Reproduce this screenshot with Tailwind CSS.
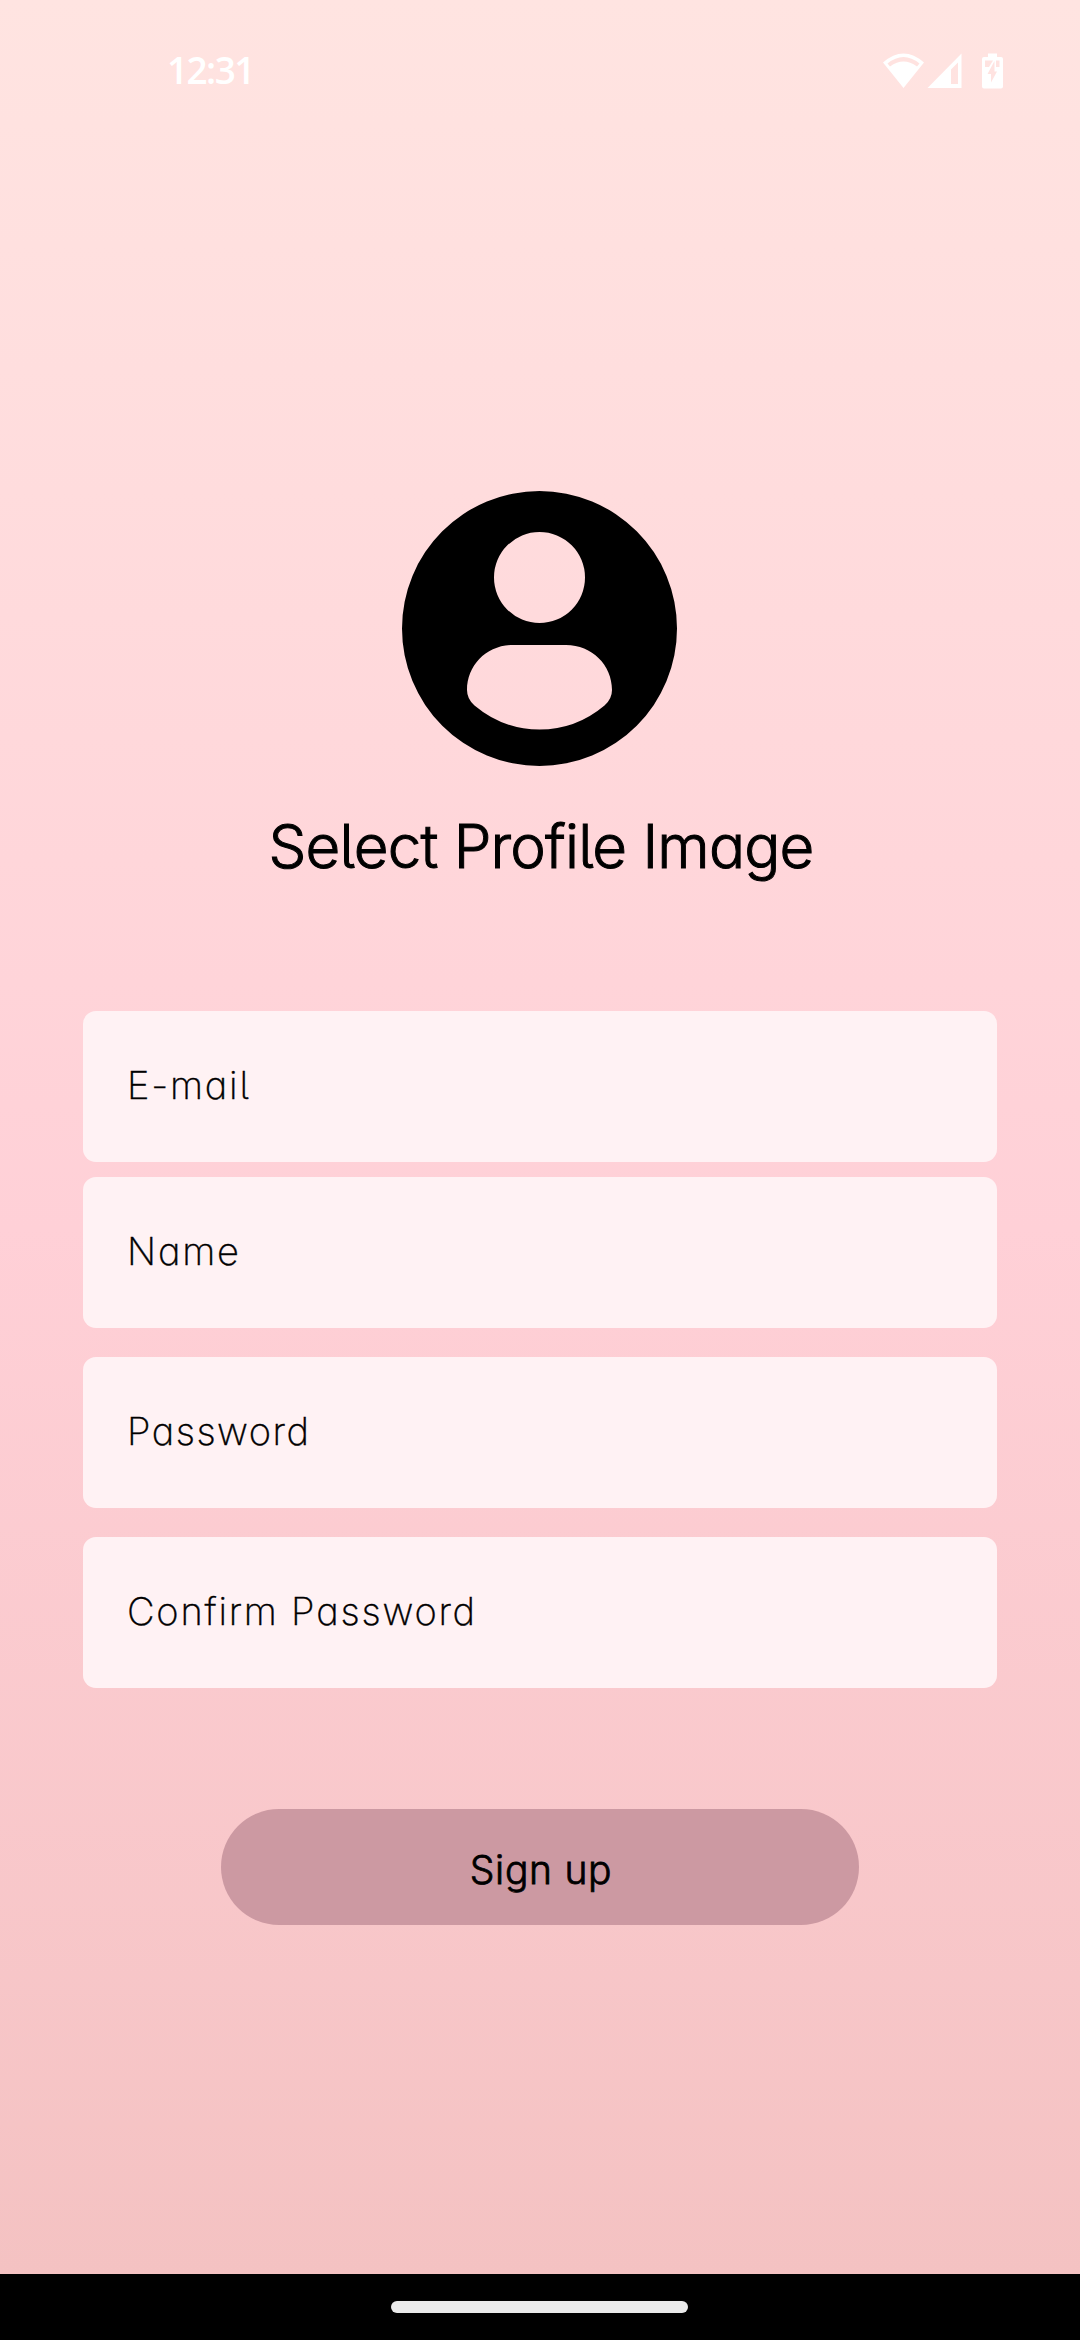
<!DOCTYPE html>
<html lang="en">
<head>
<meta charset="utf-8">
<title>Sign up</title>
<script src="https://cdn.jsdelivr.net/npm/@tailwindcss/browser@4"></script>
</head>
<body class="w-[1080px] h-[2340px] overflow-hidden flex flex-col bg-black font-[Inter,sans-serif] text-black [font-feature-settings:'cv11','cv05']">
<main class="h-[2274px] flex flex-col items-center bg-linear-to-b/srgb from-[#ffe4e1] via-[#ffd0d7] via-54% to-[#f4c2c2]">
  <header class="w-full h-[140px] shrink-0 flex justify-between pl-[167px] pr-[77px] text-white">
    <span class="mt-[44px] text-[37px] leading-[52px] font-semibold tracking-[-1.6px] font-['Open_Sans',sans-serif] [font-feature-settings:normal]">12:31</span>
    <svg class="mt-[50px]" width="121" height="42" viewBox="882 50 121 42" fill="currentColor">
      <path fill-rule="evenodd" d="M883 62.500Q903.500 44.500 924 62.500L903.500 88ZM887.500 63.500L890 66.500Q903.500 56.500 917 66.500L919.500 63.500Q903.500 50.500 887.500 63.500Z"/>
      <path fill-rule="evenodd" d="M927.500 88L961.500 53.500V88ZM951 84H958V62.500L951 69.500Z"/>
      <path fill-rule="evenodd" d="M988 53.500H997V57H1001Q1003 57 1003 59V86.500Q1003 88.500 1001 88.500H984Q982 88.500 982 86.500V59Q982 57 984 57H988ZM985 60.500V67H989L993 60.500ZM994.500 61L987.500 74H991V82.500L997 71.500H994.500ZM996 60.500V67H999.500V60.500Z"/>
    </svg>
  </header>

  <svg class="mt-[351px] mr-px shrink-0" width="275" height="275" viewBox="402 491 275 275">
    <path fill-rule="evenodd" d="M539.500 491A137.500 137.500 0 1 1 539.500 766A137.500 137.500 0 1 1 539.500 491ZM539.500 532A45.500 45.500 0 1 0 539.500 623A45.500 45.500 0 1 0 539.500 532ZM513 645C487 645 467 665 467 690Q467 699 474.500 705.500Q503 729.500 539.500 729.500Q576 729.500 604.500 705.500Q612 699 612 690C612 665 592 645 566 645Z"/>
  </svg>
  <h1 class="mt-[42px] h-[76px] ml-[2px] text-[60px] leading-[76px] font-light tracking-[-0.8px] whitespace-nowrap [-webkit-text-stroke:1px_black]">Select Profile Image</h1>

  <form class="mt-[127px] w-[914px] flex flex-col text-[38px] font-extralight tracking-[1.8px] [-webkit-text-stroke:0.4px_black]">
    <div class="h-[151px] rounded-[13px] bg-[#fff2f4] pl-[44px] pb-[3px] flex items-center">E-mail</div>
    <div class="mt-[15px] h-[151px] rounded-[13px] bg-[#fff2f4] pl-[44px] pb-[3px] flex items-center">Name</div>
    <div class="mt-[29px] h-[151px] rounded-[13px] bg-[#fff2f4] pl-[44px] pb-[3px] flex items-center tracking-[1.5px]">Password</div>
    <div class="mt-[29px] h-[151px] rounded-[13px] bg-[#fff2f4] pl-[44px] pb-[3px] flex items-center">Confirm Password</div>
  </form>

  <button class="mt-[121px] w-[638px] h-[116px] pt-[6px] pl-[2px] rounded-full bg-[#cc99a2] text-[39px] font-light tracking-[0.7px] [-webkit-text-stroke:0.8px_black] flex items-center justify-center">Sign up</button>
</main>
<footer class="h-[66px] flex justify-center pt-[27px]"><div class="w-[297px] h-[12px] mr-px rounded-full bg-[#eaeaea]"></div></footer>
</body>
</html>
